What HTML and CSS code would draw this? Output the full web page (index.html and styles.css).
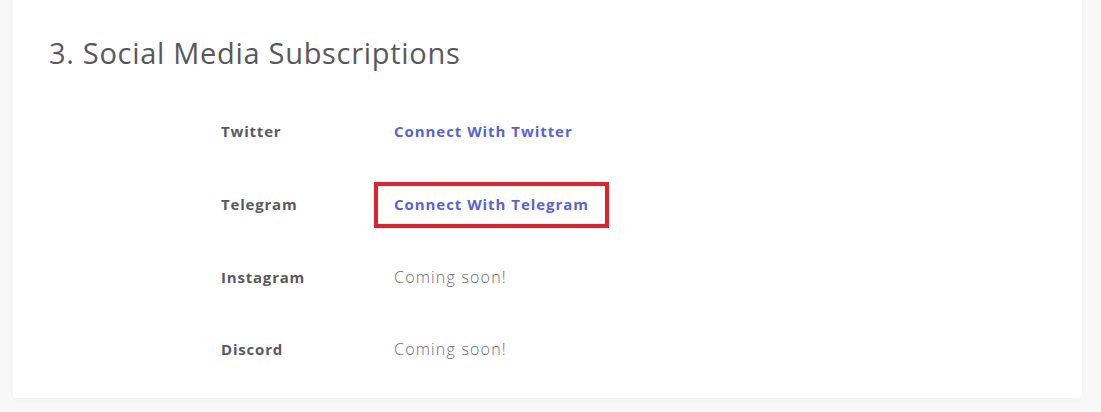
FILE: index.html
```html
<!DOCTYPE html>
<html lang="en">
<head>
    <meta charset="UTF-8">
    <title>Social Media Subscriptions</title>
    <link rel="stylesheet" href="styles.css">
</head>
<body>
    <div class="page">
        <section class="card">
            <h2 class="card-title">3. Social Media Subscriptions</h2>

            <div class="social-list">
                <div class="social-row">
                    <span class="social-name">Twitter</span>
                    <a class="social-link" href="#">Connect With Twitter</a>
                </div>
                <div class="social-row">
                    <span class="social-name">Telegram</span>
                    <a class="social-link marked" href="#">Connect With Telegram</a>
                </div>
                <div class="social-row">
                    <span class="social-name">Instagram</span>
                    <span class="social-soon">Coming soon!</span>
                </div>
                <div class="social-row">
                    <span class="social-name">Discord</span>
                    <span class="social-soon">Coming soon!</span>
                </div>
            </div>
        </section>
    </div>
</body>
</html>
```

FILE: styles.css
```css
body {
    margin: 0;
    background-color: #f8f8f8;
    font-family: 'Open Sans', 'Liberation Sans', sans-serif;
    color: #555559;
}
.page {
    padding: 0 19px 15px 13px;
}
.card {
    margin-top: -20px;
    padding: 53px 36px 12px 36px;
    background-color: #ffffff;
    border-radius: 4px;
    box-shadow: 0 0 6px rgba(0, 0, 0, 0.04);
}
.card-title {
    margin: 0 0 22px 0;
    font-size: 29px;
    font-weight: 400;
    line-height: 40px;
    letter-spacing: 0.7px;
    color: #58585c;
}
.social-list {
    margin-left: 172px;
}
.social-row {
    display: grid;
    grid-template-columns: 173px auto;
    align-items: center;
    height: 72.7px;
    font-size: 15px;
}
.social-name {
    font-weight: 700;
    letter-spacing: 0.8px;
    color: #5a5a5e;
}
.social-link {
    justify-self: start;
    font-weight: 700;
    letter-spacing: 0.95px;
    color: #5a63d5;
    text-decoration: none;
}
.social-soon {
    font-size: 16px;
    font-weight: 300;
    letter-spacing: 1.2px;
    color: #6a6a6e;
}
.marked {
    position: relative;
}
/* red annotation box drawn over the link */
.marked::after {
    content: "";
    position: absolute;
    top: -12px;
    bottom: -14px;
    left: -20px;
    right: -20px;
    border: 4px solid #e3212b;
}
```
